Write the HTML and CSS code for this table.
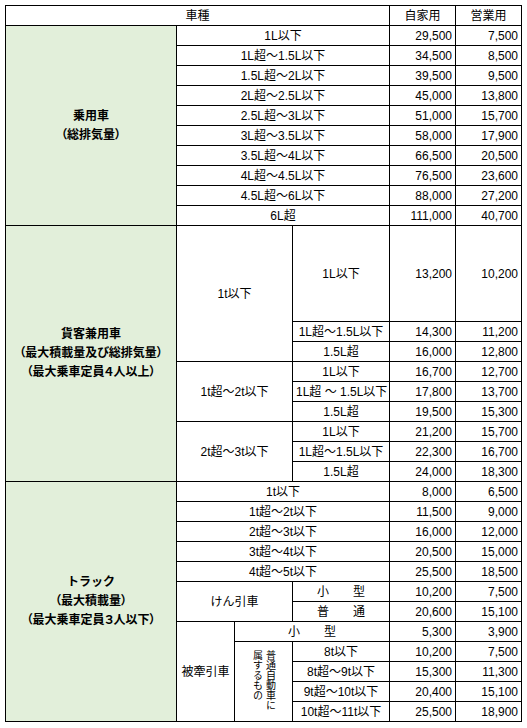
FILE: index.html
```html
<!DOCTYPE html>
<html lang="ja">
<head>
<meta charset="utf-8">
<title>自動車税</title>
<link rel="stylesheet" href="styles.css">
</head>
<body>
<table class="fee">
  <colgroup>
    <col class="c-cat"><col class="c-sub"><col class="c-sub"><col class="c-item"><col class="c-num"><col class="c-num">
  </colgroup>
  <tr>
    <td colspan="4" class="center">車種</td>
    <td class="center">自家用</td>
    <td class="center">営業用</td>
  </tr>

  <tr>
    <td rowspan="10" class="cat"><div>乗用車</div><div class="paren">（総排気量）</div></td>
    <td colspan="3" class="center">1L以下</td><td class="num">29,500</td><td class="num">7,500</td>
  </tr>
  <tr><td colspan="3" class="center">1L超～1.5L以下</td><td class="num">34,500</td><td class="num">8,500</td></tr>
  <tr><td colspan="3" class="center">1.5L超～2L以下</td><td class="num">39,500</td><td class="num">9,500</td></tr>
  <tr><td colspan="3" class="center">2L超～2.5L以下</td><td class="num">45,000</td><td class="num">13,800</td></tr>
  <tr><td colspan="3" class="center">2.5L超～3L以下</td><td class="num">51,000</td><td class="num">15,700</td></tr>
  <tr><td colspan="3" class="center">3L超～3.5L以下</td><td class="num">58,000</td><td class="num">17,900</td></tr>
  <tr><td colspan="3" class="center">3.5L超～4L以下</td><td class="num">66,500</td><td class="num">20,500</td></tr>
  <tr><td colspan="3" class="center">4L超～4.5L以下</td><td class="num">76,500</td><td class="num">23,600</td></tr>
  <tr><td colspan="3" class="center">4.5L超～6L以下</td><td class="num">88,000</td><td class="num">27,200</td></tr>
  <tr><td colspan="3" class="center">6L超</td><td class="num">111,000</td><td class="num">40,700</td></tr>

  <tr class="tall">
    <td rowspan="9" class="cat"><div>貨客兼用車</div><div class="paren">（最大積載量及び総排気量）</div><div class="paren">（最大乗車定員４人以上）</div></td>
    <td colspan="2" rowspan="3" class="center">1t以下</td>
    <td class="center">1L以下</td><td class="num">13,200</td><td class="num">10,200</td>
  </tr>
  <tr><td class="center">1L超～1.5L以下</td><td class="num">14,300</td><td class="num">11,200</td></tr>
  <tr><td class="center">1.5L超</td><td class="num">16,000</td><td class="num">12,800</td></tr>
  <tr>
    <td colspan="2" rowspan="3" class="center">1t超～2t以下</td>
    <td class="center">1L以下</td><td class="num">16,700</td><td class="num">12,700</td>
  </tr>
  <tr><td class="center">1L超 ～ 1.5L以下</td><td class="num">17,800</td><td class="num">13,700</td></tr>
  <tr><td class="center">1.5L超</td><td class="num">19,500</td><td class="num">15,300</td></tr>
  <tr>
    <td colspan="2" rowspan="3" class="center">2t超～3t以下</td>
    <td class="center">1L以下</td><td class="num">21,200</td><td class="num">15,700</td>
  </tr>
  <tr><td class="center">1L超～1.5L以下</td><td class="num">22,300</td><td class="num">16,700</td></tr>
  <tr><td class="center">1.5L超</td><td class="num">24,000</td><td class="num">18,300</td></tr>

  <tr>
    <td rowspan="12" class="cat"><div>トラック</div><div class="paren">（最大積載量）</div><div class="paren">（最大乗車定員３人以下）</div></td>
    <td colspan="3" class="center">1t以下</td><td class="num">8,000</td><td class="num">6,500</td>
  </tr>
  <tr><td colspan="3" class="center">1t超～2t以下</td><td class="num">11,500</td><td class="num">9,000</td></tr>
  <tr><td colspan="3" class="center">2t超～3t以下</td><td class="num">16,000</td><td class="num">12,000</td></tr>
  <tr><td colspan="3" class="center">3t超～4t以下</td><td class="num">20,500</td><td class="num">15,000</td></tr>
  <tr><td colspan="3" class="center">4t超～5t以下</td><td class="num">25,500</td><td class="num">18,500</td></tr>
  <tr>
    <td colspan="2" rowspan="2" class="center">けん引車</td>
    <td class="center">小　　型</td><td class="num">10,200</td><td class="num">7,500</td>
  </tr>
  <tr><td class="center">普　　通</td><td class="num">20,600</td><td class="num">15,100</td></tr>
  <tr>
    <td rowspan="5" class="center">被牽引車</td>
    <td colspan="2" class="center">小　　型</td><td class="num">5,300</td><td class="num">3,900</td>
  </tr>
  <tr>
    <td rowspan="4" class="center"><span class="vtext">普通自動車に<br>属するもの</span></td>
    <td class="center">8t以下</td><td class="num">10,200</td><td class="num">7,500</td>
  </tr>
  <tr><td class="center">8t超～9t以下</td><td class="num">15,300</td><td class="num">11,300</td></tr>
  <tr><td class="center">9t超～10t以下</td><td class="num">20,400</td><td class="num">15,100</td></tr>
  <tr><td class="center">10t超～11t以下</td><td class="num">25,500</td><td class="num">18,900</td></tr>
</table>
</body>
</html>
```
FILE: styles.css
```css
html, body {
  margin: 0;
  padding: 0;
  background: #ffffff;
}

body {
  font-family: "Liberation Sans", "Noto Sans CJK JP", sans-serif;
  font-size: 12px;
  color: #000000;
}

.fee {
  border-collapse: collapse;
  table-layout: fixed;
  width: 517px;
  margin: 5px 0 0 5px;
}

.c-cat { width: 171px; }
.c-sub { width: 58px; }
.c-item { width: 97px; }
.c-num { width: 66px; }

.fee tr {
  height: 20px;
}

.fee tr.tall {
  height: 96px;
}

.fee td {
  border: 1px solid #000000;
  padding: 0 3px;
  vertical-align: middle;
  white-space: nowrap;
  line-height: 14px;
  overflow: hidden;
}

.center {
  text-align: center;
}

.num {
  text-align: right;
}

.cat {
  background: #e2efda;
  text-align: center;
  font-weight: bold;
  line-height: 19px !important;
}

.paren {
  font-feature-settings: "palt";
}

.vtext {
  display: inline-block;
  writing-mode: vertical-rl;
  font-size: 10px;
  line-height: 13px;
  text-align: start;
}
```
